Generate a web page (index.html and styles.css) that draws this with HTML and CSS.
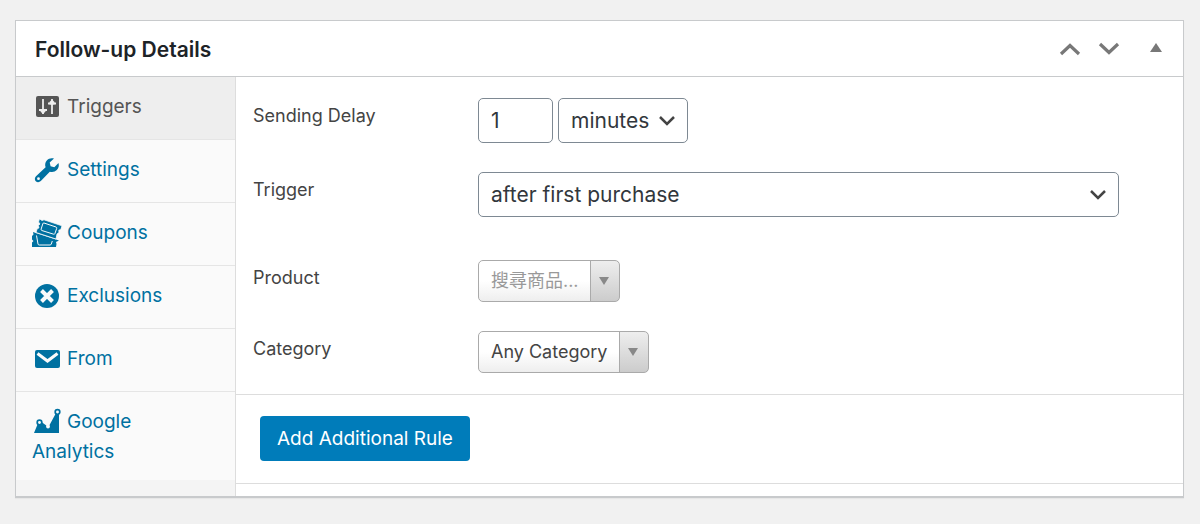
FILE: index.html
```html
<!DOCTYPE html>
<html lang="en">
<head>
  <meta charset="UTF-8">
  <meta name="viewport" content="width=device-width, initial-scale=1.0">
  <title>Follow-up Details</title>
  <link rel="stylesheet" href="styles.css">
</head>
<body>
  <section class="postbox">
    <header class="postbox-header">
      <h2>Follow-up Details</h2>
      <div class="handle-actions">
        <button type="button" aria-label="Move up">
          <svg width="22" height="14" viewBox="0 0 22 14"><path d="M2 12 11 3.500 20 12" fill="none" stroke="#787878" stroke-width="3.200"/></svg>
        </button>
        <button type="button" aria-label="Move down">
          <svg width="22" height="14" viewBox="0 0 22 14"><path d="M2 2 11 10.500 20 2" fill="none" stroke="#787878" stroke-width="3.200"/></svg>
        </button>
        <button type="button" class="toggle" aria-label="Toggle panel">
          <svg width="12" height="14" viewBox="0 0 12 14"><path d="M0 10 6 1l6 9z" fill="#787878"/></svg>
        </button>
      </div>
    </header>

    <div class="panel-wrap">
      <ul class="tabs">
        <li class="active"><a href="#triggers"><svg class="icon" viewBox="0 0 30 28"><rect x="4" y="3" width="23" height="21" rx="2" fill="currentColor"/><path d="M11 6v15M7 17h8M20 6v15M16 10.500h8" stroke="#eee" stroke-width="1.800" fill="none"/><path d="M8.500 16h5v2.500L11 21l-2.500-2.500zM17.500 11.500V9L20 6.500 22.500 9v2.500z" fill="#eee"/></svg>Triggers</a></li>
        <li><a href="#settings"><svg class="icon" viewBox="0 0 30 28"><path fill="currentColor" fill-rule="evenodd" d="M22 2.500c-2.500-.8-5.500-.2-7.200 1.900-1.700 1.900-2 4.500-1.200 6.800L4 20.300c-1.500 1.500-1.500 3.700-.2 5s3.600 1.300 5-.2l9-9.400c2.400.8 5.200.3 7-1.600 1.900-1.900 2.500-4.500 1.700-7l-4.200 4.100-3.700-.9-.9-3.700zM6.500 21.300a1.400 1.400 0 1 1 0 2.800 1.400 1.400 0 0 1 0-2.800z"/></svg>Settings</a></li>
        <li><a href="#coupons"><svg class="icon" viewBox="0 0 30 28"><path fill="currentColor" d="M1 13l3.500 1.200L27 21.500l-3 1.500.5 2-.5 3H0v-4.500l1.500-1.500L0 20.500V17l1.500-1.500z"/><path fill="none" stroke="#fafafa" stroke-width="1" d="M4.500 16.500L6 25q.2 1 1.200 1H18q1 0 1.300-1l1-3"/><path fill="currentColor" stroke="#fafafa" stroke-width=".8" d="M7.500-.2L10 1.500l2-.7 18 6-1.200 3.700-2 .7.200 2.300-2 1.500L24 20 4 13.500 5 10l2-1.200-.7-2.300L8 5l-1.500-2z"/><path fill="none" stroke="#fafafa" stroke-width="1" d="M12 4l12 4q1 .4.700 1.400l-1.800 5.200q-.3.900-1.300.6L9.800 11.500q-1-.4-.7-1.300l1.700-5.400Q11.100 3.700 12 4z"/></svg>Coupons</a></li>
        <li><a href="#exclusions"><svg class="icon" viewBox="0 0 30 28"><circle cx="15" cy="14" r="12" fill="currentColor"/><path d="M9.500 8.500l11 11M20.500 8.500l-11 11" stroke="#fafafa" stroke-width="4"/></svg>Exclusions</a></li>
        <li><a href="#from"><svg class="icon" viewBox="0 0 30 28"><rect x="3" y="5" width="25" height="18" rx="2" fill="currentColor"/><path d="M5.500 8.500L15.500 16l10-7.500" stroke="#fafafa" stroke-width="3" fill="none"/></svg>From</a></li>
        <li><a href="#analytics"><svg class="icon" viewBox="0 0 30 28"><path fill="currentColor" d="M2 25L6.500 14l3 0 5.500 4 2 0L24 5h3v20z"/><g fill="#fafafa" stroke="currentColor" stroke-width="1.700"><circle cx="7.500" cy="14.500" r="2.300"/><circle cx="25.500" cy="4" r="2.300"/></g><circle cx="16" cy="18.500" r="1.900" fill="#fafafa"/></svg>Google Analytics</a></li>
      </ul>

      <form class="panel">
        <div class="fields">
          <label for="delay">Sending Delay</label>
          <div class="controls">
            <input type="text" id="delay" class="box delay" value="1">
            <select class="box" aria-label="Delay unit"><option>minutes</option></select>
          </div>

          <label for="trigger">Trigger</label>
          <div class="controls trigger-row">
            <select id="trigger" class="box wide"><option>after first purchase</option></select>
          </div>

          <label for="product">Product</label>
          <div class="controls">
            <select id="product" class="chosen placeholder"><option>搜尋商品...</option></select>
          </div>

          <label for="category">Category</label>
          <div class="controls">
            <select id="category" class="chosen"><option>Any Category</option></select>
          </div>
        </div>
        <div class="rule-actions">
          <button type="button" class="button-primary">Add Additional Rule</button>
        </div>
      </form>
    </div>
  </section>
</body>
</html>
```
FILE: styles.css
```css
* { box-sizing: border-box; }
body {
  margin: 0;
  padding: 20px 16px 27px 15px;
  background: #f1f1f1;
  color: #444;
  font: 18px/30px Inter, "Noto Sans CJK TC", sans-serif;
}
button, input, select { font-family: inherit; }

.postbox {
  background: #fff;
  border: 1px solid #c8cacc;
  border-bottom-width: 2px;
  box-shadow: 0 1px 1px rgba(0,0,0,0.04);
}
.postbox-header {
  display: flex;
  align-items: center;
  justify-content: space-between;
  height: 56px;
  padding: 0 21px 0 19px;
  border-bottom: 1px solid #c8cacc;
}
.postbox-header h2 {
  margin: 0;
  padding-top: 3px;
  font-size: 21px;
  font-weight: 600;
  color: #1d2327;
}
.handle-actions { display: flex; align-items: center; gap: 17px; }
.handle-actions button {
  display: flex;
  padding: 0;
  border: none;
  background: none;
  cursor: pointer;
}
.handle-actions .toggle { margin-left: 13px; }

.panel-wrap { display: flex; }
.tabs {
  flex: 0 0 220px;
  margin: 0;
  padding: 0 0 16px;
  list-style: none;
  background: #f4f4f4;
  border-right: 1px solid #ddd;
}
.tabs a {
  display: block;
  height: 63px;
  padding: 15px 40px 0 16px;
  background: #fafafa;
  border-bottom: 1px solid #e5e5e5;
  font-size: 19px;
  color: #0071a1;
  text-decoration: none;
}
.tabs li:last-child a { height: auto; padding-bottom: 13px; border-bottom: none; }
.tabs .active a { background: #eee; color: #555; }
.icon {
  width: 30px;
  height: 28px;
  margin-right: 5px;
  vertical-align: -8px;
}

.panel { flex: 1; min-width: 0; }
.fields {
  display: grid;
  grid-template-columns: 225px 1fr;
  row-gap: 29px;
  padding: 21px 64px 21px 17px;
  border-bottom: 1px solid #ddd;
}
.fields label { padding-top: 3px; }
.controls { display: flex; gap: 5px; }
.trigger-row { margin-bottom: 14px; }

.box {
  height: 45px;
  padding: 0 12px;
  border: 1px solid #7e8993;
  border-radius: 5px;
  background: #fff;
  color: #32373c;
  font-size: 21px;
}
.delay { width: 75px; }
select { appearance: none; cursor: pointer; }
select.box {
  padding-right: 37px;
  background: #fff url("data:image/svg+xml,%3Csvg xmlns='http://www.w3.org/2000/svg' viewBox='0 0 18 12'%3E%3Cpath d='M2 2l7 7 7-7' fill='none' stroke='%23444' stroke-width='2.500'/%3E%3C/svg%3E") no-repeat right 11px center / 18px 12px;
}
.wide { width: 100%; }

.chosen {
  height: 42px;
  padding: 0 40px 2px 12px;
  border: 1px solid #aaa;
  border-radius: 5px;
  background:
    url("data:image/svg+xml,%3Csvg xmlns='http://www.w3.org/2000/svg' viewBox='0 0 10 10'%3E%3Cpath d='M0 1h10L5 9z' fill='%23888'/%3E%3C/svg%3E") no-repeat right 10px center / 10px 10px,
    linear-gradient(#eee, #ccc) no-repeat right / 28px 100%,
    linear-gradient(#aaa, #aaa) no-repeat right / 29px 100%,
    linear-gradient(#fff 50%, #eee);
  color: #444;
  font-size: 18px;
}
.placeholder { color: #999; }

.rule-actions {
  padding: 21px 24px 22px;
  border-bottom: 1px solid #ddd;
}
.button-primary {
  display: block;
  height: 45px;
  padding: 0 17px;
  border: none;
  border-radius: 4px;
  background: #007cba;
  color: #fff;
  font-size: 19px;
  cursor: pointer;
}
```
